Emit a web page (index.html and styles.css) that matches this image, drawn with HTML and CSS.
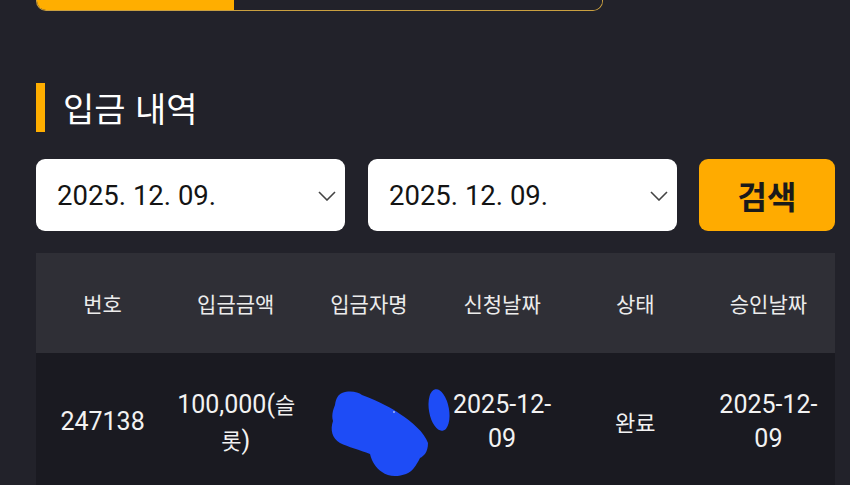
FILE: index.html
```html
<!DOCTYPE html>
<html lang="ko">
<head>
<meta charset="utf-8">
<title>입금 내역</title>
<link rel="stylesheet" href="styles.css">
</head>
<body>
<div class="page">
  <div class="tabs">
    <div class="tab active"></div>
    <div class="tab"></div>
  </div>

  <h2 class="section-title"><span class="bar"></span>입금 내역</h2>

  <div class="filters">
    <div class="date-select">
      <span>2025. 12. 09.</span>
      <svg class="chev" width="18" height="10" viewBox="0 0 18 10"><path d="M1 1 L9 9 L17 1" fill="none" stroke="#444" stroke-width="1.6"/></svg>
    </div>
    <div class="date-select">
      <span>2025. 12. 09.</span>
      <svg class="chev" width="18" height="10" viewBox="0 0 18 10"><path d="M1 1 L9 9 L17 1" fill="none" stroke="#444" stroke-width="1.6"/></svg>
    </div>
    <button class="search-btn">검색</button>
  </div>

  <div class="table">
    <div class="thead">
      <div class="cell">번호</div>
      <div class="cell">입금금액</div>
      <div class="cell">입금자명</div>
      <div class="cell">신청날짜</div>
      <div class="cell">상태</div>
      <div class="cell">승인날짜</div>
    </div>
    <div class="trow">
      <div class="cell">247138</div>
      <div class="cell">100,000(<span class="ko">슬롯</span>)</div>
      <div class="cell name"></div>
      <div class="cell">2025-12-<br>09</div>
      <div class="cell"><span class="ko">완료</span></div>
      <div class="cell">2025-12-<br>09</div>
      <svg class="redact" width="130" height="100" viewBox="320 380 130 100">
        <path d="M342 393 C350 390 358 392 362 395 C380 402 392 408 400 414 C412 422 424 432 428 443 C428 452 424 456 420 458 C416 466 412 472 406 474 C398 477 388 477 382 472 C376 468 372 462 370 454 C360 450 348 447 340 443 C332 438 330 430 333 421 C331 414 334 408 335 405 C336 398 338 395 342 393 Z" fill="#1e4cf6"/>
        <ellipse cx="439" cy="410" rx="10" ry="21" transform="rotate(-10 439 410)" fill="#1e4cf6"/>
        <circle cx="394" cy="412" r="0.8" fill="#fff"/>
      </svg>
    </div>
  </div>
</div>
</body>
</html>
```

FILE: styles.css
```css
* { box-sizing: border-box; }

html, body {
  margin: 0;
  padding: 0;
  background: #22222a;
  overflow: hidden;
  height: 100%;
}

body {
  font-family: Roboto, "Noto Sans CJK KR", sans-serif;
  color: #f0f0f0;
}

.page {
  width: 850px;
  padding-left: 36px;
}

.tabs {
  display: flex;
  width: 567px;
  height: 50px;
  margin-top: -39px;
  border: 1px solid #caa040;
  border-top: none;
  border-radius: 0 0 10px 10px;
  overflow: hidden;
}

.tab {
  flex: 1;
  background: #22222a;
}

.tab.active {
  flex: 0 0 197px;
  background: #ffae00;
}

.section-title {
  display: flex;
  align-items: center;
  gap: 18px;
  height: 49px;
  margin: 72px 0 0 0;
  font-family: "Noto Sans CJK KR", sans-serif;
  font-size: 34px;
  font-weight: 400;
  color: #ffffff;
}

.section-title .bar {
  width: 9px;
  height: 49px;
  background: #ffae00;
}

.filters {
  display: flex;
  gap: 23px;
  margin-top: 27px;
  width: 799px;
  height: 72px;
}

.date-select {
  flex: 0 0 309px;
  display: flex;
  align-items: center;
  justify-content: space-between;
  padding: 0 9px 0 21px;
  background: #ffffff;
  border-radius: 9px;
  color: #141414;
  font-family: Roboto, sans-serif;
  font-size: 27.5px;
}

.date-select .chev {
  margin-top: 2px;
}

.search-btn {
  flex: 0 0 136px;
  margin-left: -1px;
  border: none;
  border-radius: 9px;
  background: #ffab00;
  color: #1a1a1a;
  font-family: "Noto Sans CJK KR", sans-serif;
  font-size: 32px;
  font-weight: 700;
  padding: 0;
}

.table {
  width: 799px;
  margin-top: 22px;
}

.thead, .trow {
  display: grid;
  grid-template-columns: repeat(6, minmax(0, 1fr));
}

.thead {
  height: 100px;
  background: #2f2f36;
  font-family: "Noto Sans CJK KR", sans-serif;
  font-size: 21px;
  color: #ececec;
}

.thead .cell {
  display: flex;
  align-items: center;
  justify-content: center;
}

.trow {
  position: relative;
  background: #1a1a21;
  padding: 33px 0;
  font-size: 25px;
  line-height: 34px;
  color: #f2f2f2;
}

.trow .cell {
  align-self: center;
  text-align: center;
  padding: 0 8px;
}

.trow .ko {
  font-family: "Noto Sans CJK KR", sans-serif;
  font-size: 22px;
}

.redact {
  position: absolute;
  left: 284px;
  top: 27px;
}
```
